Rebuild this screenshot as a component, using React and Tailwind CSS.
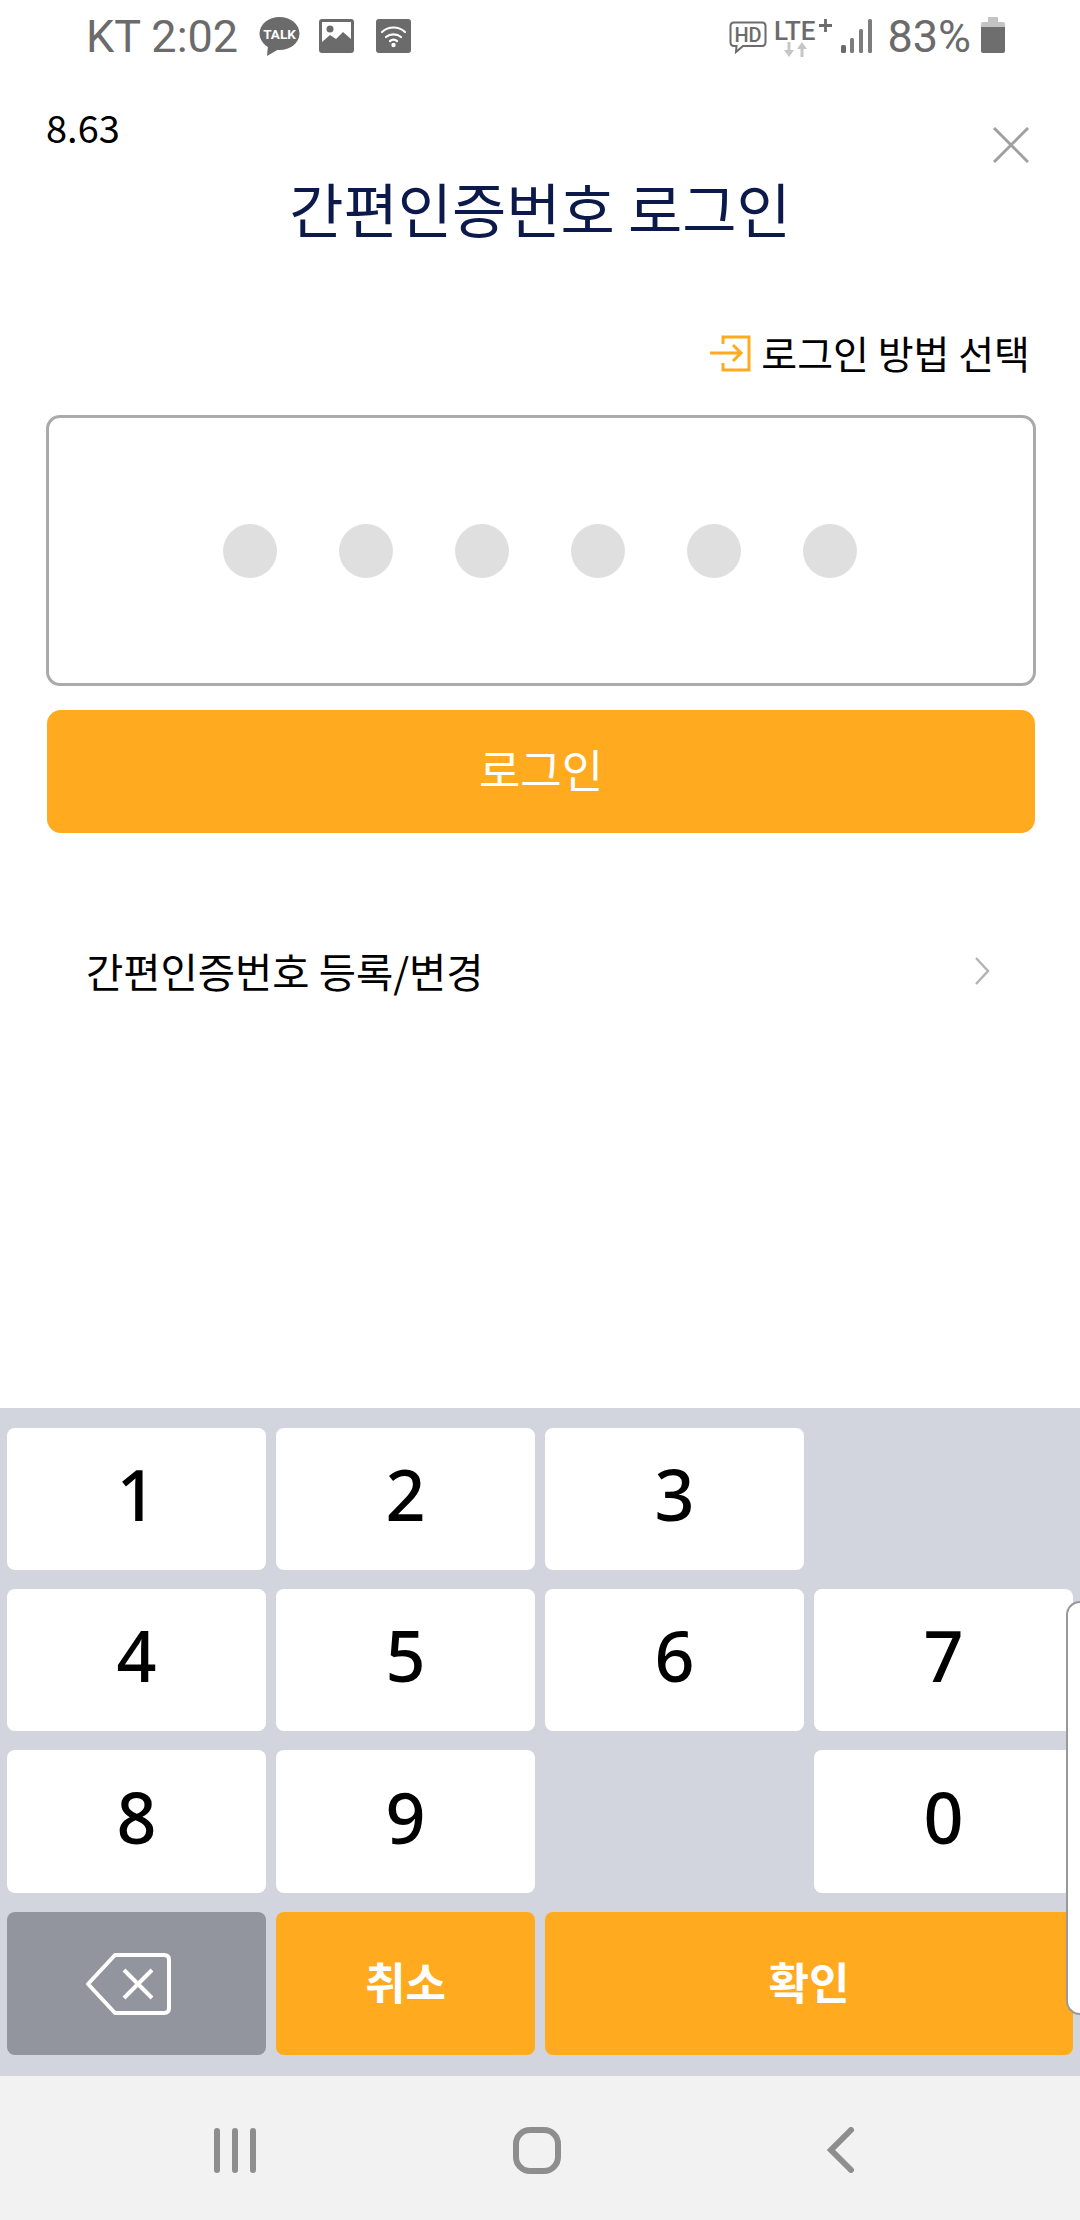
import React from 'react';

const dots = [0, 1, 2, 3, 4, 5];

const keys = [
  { label: '1' }, { label: '2' }, { label: '3' }, { label: '' },
  { label: '4' }, { label: '5' }, { label: '6' }, { label: '7' },
  { label: '8' }, { label: '9' }, { label: '' }, { label: '0' },
];

function StatusLeftIcons() {
  return (
    <div className="flex items-center ml-[21px]">
      {/* kakao talk */}
      <svg width="41" height="39" viewBox="0 0 41 39" className="mr-[19px]">
        <ellipse cx="20.5" cy="16.5" rx="20" ry="16.5" fill="#6b6b6b" />
        <path d="M9 28 L8 39 L20 32 Z" fill="#6b6b6b" />
        <text x="20.5" y="21.5" textAnchor="middle" fontFamily="Roboto, sans-serif" fontWeight="700" fontSize="13.5" fill="#fff">TALK</text>
      </svg>
      {/* picture */}
      <svg width="35" height="34" viewBox="0 0 35 34" className="mr-[22px]">
        <rect width="35" height="34" rx="3" fill="#6b6b6b" />
        <rect x="3" y="3" width="29" height="24" fill="#fff" />
        <circle cx="11" cy="10" r="3.5" fill="#6b6b6b" />
        <path d="M3 23 L11 16 L17 20 L24 13 L32 20 V28 H3 Z" fill="#6b6b6b" />
      </svg>
      {/* wifi */}
      <svg width="35" height="34" viewBox="0 0 35 34">
        <rect width="35" height="34" rx="3" fill="#6b6b6b" />
        <g fill="none" stroke="#fff" strokeWidth="2.2" strokeLinecap="round">
          <path d="M6 13 C12.5 7 22.5 7 29 13" />
          <path d="M10 18 C14 14.5 21 14.5 25 18" />
          <path d="M14 22 C16 20.5 19 20.5 21 22" />
        </g>
        <circle cx="17.5" cy="26" r="2.2" fill="#fff" />
      </svg>
    </div>
  );
}

function StatusRightIcons() {
  return (
    <div className="flex items-center">
      {/* volte hd */}
      <svg width="38" height="33" viewBox="0 0 38 33" className="mr-[7px] mt-[3px]">
        <path d="M5 1.5 H33 Q36.5 1.5 36.5 5 V21 Q36.5 25 33 25 H14 L7 31 L7.5 25 H5 Q1.5 25 1.5 21 V5 Q1.5 1.5 5 1.5 Z" fill="#fff" stroke="#6b6b6b" strokeWidth="2" />
        <text x="19" y="21" textAnchor="middle" fontFamily="Roboto, sans-serif" fontWeight="500" fontSize="20" fill="#6b6b6b">HD</text>
      </svg>
      {/* lte+ */}
      <svg width="60" height="42" viewBox="0 0 60 42" className="mr-[7px] mb-[1px]">
        <text x="0" y="25" fontFamily="Roboto, sans-serif" fontWeight="500" fontSize="26" fill="#6b6b6b">LTE</text>
        <path d="M45 10.5 H58 M51.5 4 V17" stroke="#6b6b6b" strokeWidth="2.8" />
        <path d="M15 27 V36" stroke="#c6c6c6" strokeWidth="3" />
        <path d="M10 35 H20 L15 42 Z" fill="#c6c6c6" />
        <path d="M28 42 V33" stroke="#c6c6c6" strokeWidth="3" />
        <path d="M23 34 H33 L28 27 Z" fill="#c6c6c6" />
      </svg>
      {/* signal */}
      <svg width="31" height="34" viewBox="0 0 31 34" className="mr-[15px]">
        <rect x="0" y="26" width="5" height="8" rx="1.5" fill="#6b6b6b" />
        <rect x="9" y="19" width="4" height="15" rx="1.5" fill="#7d7d7d" />
        <rect x="18" y="10" width="4" height="24" rx="1.5" fill="#7d7d7d" />
        <rect x="27" y="0" width="4" height="34" rx="1.5" fill="#7d7d7d" />
      </svg>
      <span className="font-['Roboto',sans-serif] text-[45px] leading-none text-[#6b6b6b] mr-[10px]">83%</span>
      {/* battery */}
      <svg width="24" height="36" viewBox="0 0 24 36" className="mb-[2px]">
        <path d="M7 0 H17 V5 H22 Q24 5 24 7 V10 H0 V7 Q0 5 2 5 H7 Z" fill="#c4c4c4" />
        <path d="M0 10 H24 V34 Q24 36 22 36 H2 Q0 36 0 34 Z" fill="#6e6e6e" />
      </svg>
    </div>
  );
}

export default function App() {
  return (
    <div className="relative w-[1080px] h-[2220px] flex flex-col overflow-hidden bg-white font-['Noto_Sans_CJK_KR','Noto_Sans',sans-serif] text-black">
      {/* status bar */}
      <div className="h-[70px] pt-[2px] flex items-center justify-between pl-[86px] pr-[75px] shrink-0">
        <div className="flex items-center">
          <span className="font-['Roboto',sans-serif] text-[45px] leading-none text-[#6b6b6b]">KT 2:02</span>
          <StatusLeftIcons />
        </div>
        <StatusRightIcons />
      </div>

      {/* version + close */}
      <div className="h-[108px] flex justify-between pl-[46px] pr-[51px] shrink-0">
        <span className="text-[38px] leading-[52px] mt-[31px]">8.63</span>
        <svg width="36" height="36" viewBox="0 0 36 36" className="mt-[57px]">
          <path d="M1 1 L35 35 M35 1 L1 35" stroke="#a0a0a0" strokeWidth="3" fill="none" />
        </svg>
      </div>

      <h1 className="h-[60px] shrink-0 text-center text-[59px] leading-[60px] font-normal text-[#0b1a4a]">간편인증번호 로그인</h1>

      {/* login method */}
      <div className="h-[60px] mt-[84px] flex items-center justify-end gap-[10px] pr-[50px] shrink-0">
        <svg width="41" height="37" viewBox="0 0 41 37" className="mt-[3px] -ml-[2px]">
          <path d="M13 9 V2 H39 V35 H13 V28" fill="none" stroke="#ffaa1f" strokeWidth="3" />
          <path d="M0 18 H30 M23 10 L31 18 L23 26" fill="none" stroke="#ffaa1f" strokeWidth="3" />
        </svg>
        <span className="text-[39px] leading-none">로그인 방법 선택</span>
      </div>

      <div className="ml-[46px] mr-[44px] mt-[33px] h-[271px] pr-[3px] flex items-center justify-center gap-[62px] border-[3px] border-[#aaaaaa] rounded-[14px] shrink-0">
        {dots.map((d) => (
          <div key={d} className="w-[54px] h-[54px] rounded-full bg-[#dfdfdf]" />
        ))}
      </div>

      <button className="ml-[47px] mr-[45px] mt-[24px] h-[123px] pb-[7px] flex items-center justify-center rounded-[14px] bg-[#ffaa1f] text-white text-[45px] leading-none shrink-0">
        로그인
      </button>

      <div className="h-[60px] mt-[108px] flex items-center justify-between pl-[86px] pr-[90px] shrink-0">
        <span className="text-[40.5px] leading-none">간편인증번호 등록/변경</span>
        <svg width="16" height="30" viewBox="0 0 16 30">
          <path d="M2 2 L14 15 L2 28" fill="none" stroke="#b4b4b4" strokeWidth="2.5" />
        </svg>
      </div>

      <div className="flex-1" />

      {/* keypad */}
      <div className="relative h-[668px] bg-[#d2d5dd] pt-[20px] pl-[7px] shrink-0">
        <div className="grid grid-cols-[repeat(4,259px)] grid-rows-[142px_142px_143px_143px] gap-x-[10px] gap-y-[19px]">
          {keys.map((k, i) =>
            k.label ? (
              <div key={i} className="flex items-center justify-center pb-[10px] rounded-[8px] bg-white text-[70px] leading-none font-medium font-['Noto_Sans',sans-serif]">
                {k.label}
              </div>
            ) : (
              <div key={i} />
            )
          )}
          <div className="flex items-center justify-center pr-[17px] rounded-[8px] bg-[#93959e]">
            <svg width="86" height="62" viewBox="0 0 86 62">
              <path d="M30 2 H79 Q84 2 84 7 V55 Q84 60 79 60 H30 L3 31 Z" fill="none" stroke="#fff" strokeWidth="4" strokeLinejoin="round" />
              <path d="M39 17 L67 45 M67 17 L39 45" fill="none" stroke="#fff" strokeWidth="4" />
            </svg>
          </div>
          <div className="flex items-center justify-center pb-[6px] rounded-[8px] bg-[#ffaa1f] text-white text-[44px] leading-none font-semibold">
            취소
          </div>
          <div className="col-span-2 flex items-center justify-center pb-[6px] rounded-[8px] bg-[#ffaa1f] text-white text-[44px] leading-none font-semibold">
            확인
          </div>
        </div>
        {/* samsung edge handle */}
        <div className="absolute right-0 top-[193px] w-[14px] h-[414px] bg-white border-2 border-r-0 border-[#999999] rounded-l-[14px]" />
      </div>

      {/* nav bar */}
      <div className="h-[144px] bg-[#f2f2f2] flex items-center shrink-0 pl-[214px] pt-[4px]">
        <div className="flex gap-[12px]">
          <div className="w-[6px] h-[45px] rounded-full bg-[#8e8e8e]" />
          <div className="w-[6px] h-[45px] rounded-full bg-[#8e8e8e]" />
          <div className="w-[6px] h-[45px] rounded-full bg-[#8e8e8e]" />
        </div>
        <div className="w-[48px] h-[47px] ml-[257px] border-[6px] border-[#8e8e8e] rounded-[17px]" />
        <svg width="28" height="46" viewBox="0 0 28 46" className="ml-[266px]">
          <path d="M24 3 L4 23 L24 43" fill="none" stroke="#8e8e8e" strokeWidth="6" strokeLinecap="round" strokeLinejoin="miter" />
        </svg>
      </div>
    </div>
  );
}
